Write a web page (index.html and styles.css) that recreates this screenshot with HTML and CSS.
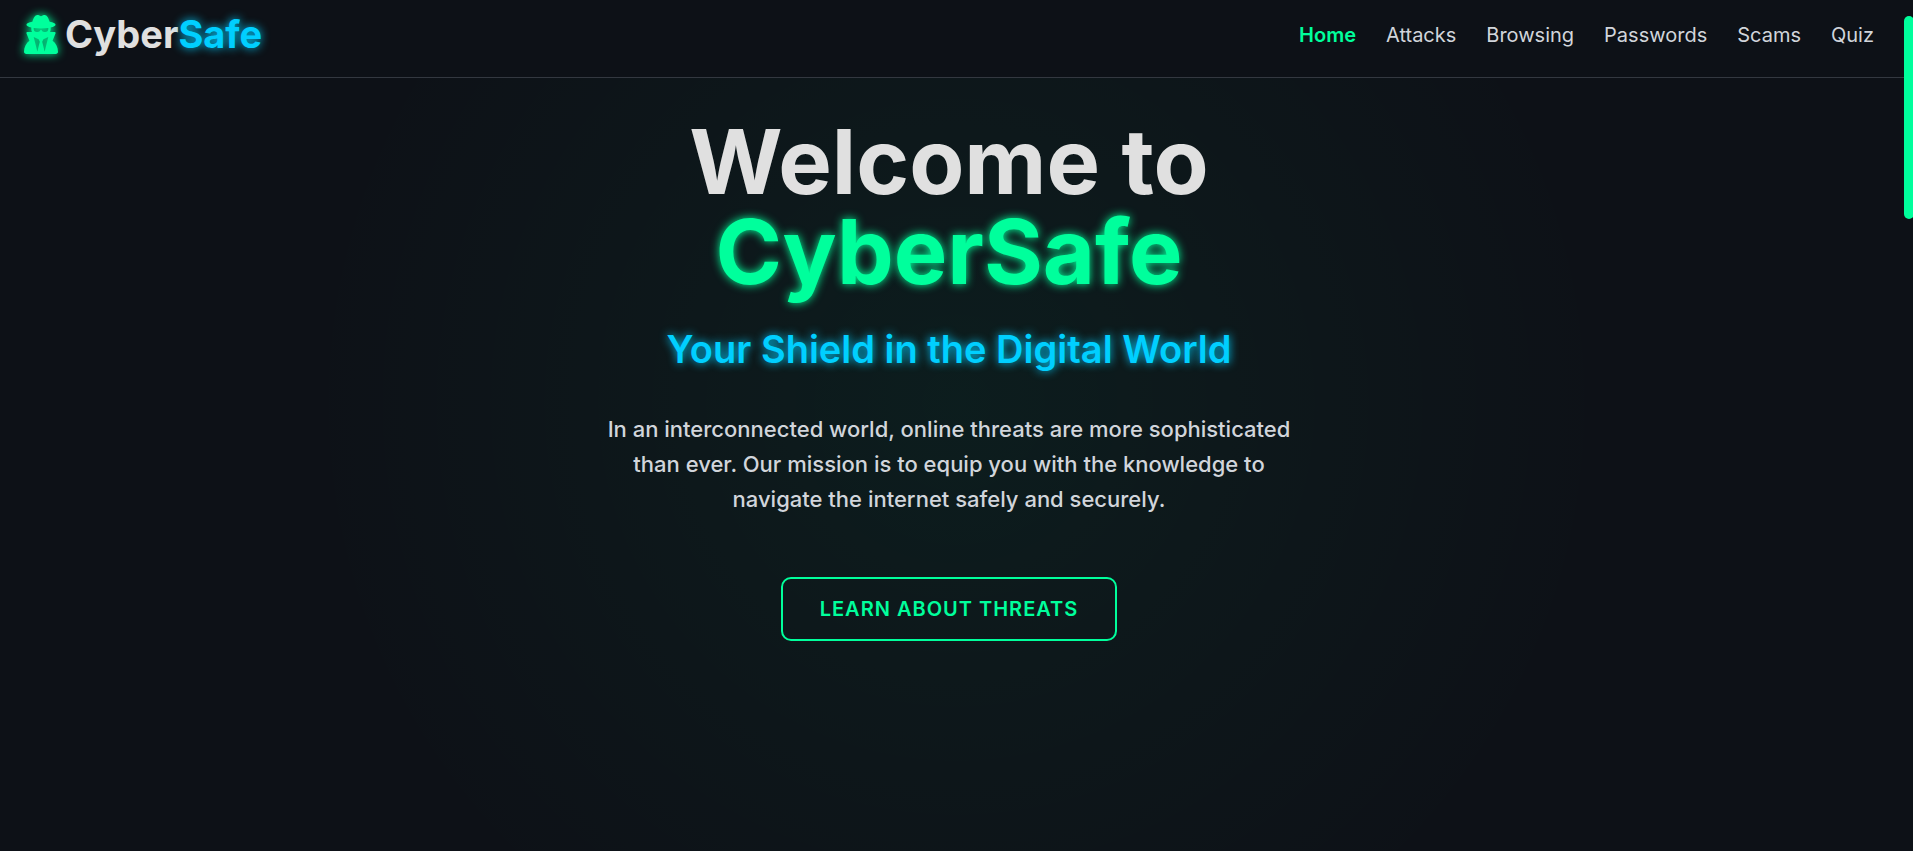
FILE: index.html
```html
<!DOCTYPE html>
<html lang="en">
<head>
    <meta charset="UTF-8">
    <meta name="viewport" content="width=device-width, initial-scale=1.0">
    <title>CyberSafe</title>
    <link rel="stylesheet" href="styles.css">
</head>
<body>
    <header class="site-header">
        <a href="#" class="logo">
            <svg class="logo-icon" viewBox="0 0 448 512" aria-hidden="true">
                <path d="M224 16c-6.7 0-10.8-2.8-15.5-6.1C201.9 5.4 194 0 176 0c-30.5 0-52 43.7-66 89.4C62.7 98.1 32 112.2 32 128c0 14.3 25 27.1 64.6 35.9c-.4 4-.6 8-.6 12.1c0 17 3.3 33.2 9.3 48H45.4C38 224 32 230 32 237.4c0 1.7 .3 3.4 1 5l38.8 96.9C28.2 371.8 0 423.8 0 482.3C0 498.7 13.3 512 29.7 512H418.3c16.4 0 29.7-13.3 29.7-29.7c0-58.5-28.2-110.4-71.7-143L415 242.4c.6-1.6 1-3.3 1-5c0-7.4-6-13.4-13.4-13.4H342.7c6-14.8 9.3-31 9.3-48c0-4.1-.2-8.1-.6-12.1C391 155.1 416 142.3 416 128c0-15.8-30.7-29.9-78-38.6C324 43.7 302.5 0 272 0c-18 0-25.9 5.4-32.5 9.9c-4.8 3.3-8.8 6.1-15.5 6.1zm56 208H267.6c-16.5 0-31.1-10.6-36.3-26.2c-2.3-7-12.2-7-14.5 0c-5.2 15.6-19.9 26.2-36.3 26.2H168c-22.1 0-40-17.9-40-40V169.6c28.2 4.1 61 6.4 96 6.4s67.8-2.3 96-6.4V184c0 22.1-17.9 40-40 40zm-88 96l16 32L176 480 128 288l64 32zm128-32L272 480 240 352l16-32 64-32z"/>
            </svg>
            <span class="logo-text">Cyber<span class="logo-accent">Safe</span></span>
        </a>
        <nav class="nav-links">
            <a href="#home" class="active">Home</a>
            <a href="#attacks">Attacks</a>
            <a href="#browsing">Browsing</a>
            <a href="#passwords">Passwords</a>
            <a href="#scams">Scams</a>
            <a href="#quiz">Quiz</a>
        </nav>
    </header>

    <main class="hero" id="home">
        <h1>Welcome to<br><span class="glow-green">CyberSafe</span></h1>
        <h2>Your Shield in the Digital World</h2>
        <p>In an interconnected world, online threats are more sophisticated than ever. Our mission is to equip you with the knowledge to navigate the internet safely and securely.</p>
        <button type="button" class="cta-button">Learn About Threats</button>
    </main>

    <div class="scroll-thumb"></div>
</body>
</html>
```
FILE: styles.css
```css
:root {
    --bg: #0d1117;
    --green: #00ff9c;
    --blue: #00cfff;
    --text: #e0e0e0;
    --muted: #d1d5db;
}
* {
    box-sizing: border-box;
}
body {
    margin: 0;
    min-height: 100vh;
    display: flex;
    flex-direction: column;
    background-color: var(--bg);
    color: var(--text);
    font-family: 'Inter', sans-serif;
    overflow: hidden;
}
a {
    color: inherit;
    text-decoration: none;
}

/* Header */
.site-header {
    display: flex;
    justify-content: space-between;
    align-items: center;
    padding: 12px 39px 20px 24px;
    border-bottom: 1px solid #333840;
}
.logo {
    display: flex;
    align-items: center;
    gap: 7px;
    font-size: 38px;
    line-height: 45px;
    font-weight: 700;
}
.logo-icon {
    width: 34px;
    height: 39px;
    fill: var(--green);
    filter: drop-shadow(0 0 5px var(--green));
}
.logo-accent {
    color: var(--blue);
    text-shadow: 0 0 10px var(--blue);
}
.nav-links {
    display: flex;
    gap: 30px;
    font-size: 20px;
    line-height: 30px;
    font-weight: 400;
    color: var(--muted);
}
.nav-links .active {
    color: var(--green);
    font-weight: 600;
}

/* Hero */
.hero {
    flex: 1;
    display: flex;
    flex-direction: column;
    align-items: center;
    padding: 39px 15px 40px 0;
    text-align: center;
    background: radial-gradient(circle at 50% 42%, rgba(0, 255, 156, 0.05) 0%, rgba(0, 255, 156, 0) 62%);
}
.hero h1 {
    margin: 0 0 30px;
    font-size: 90px;
    line-height: 90px;
    font-weight: 700;
}
.glow-green {
    color: var(--green);
    text-shadow: 0 0 10px var(--green);
}
.hero h2 {
    margin: 0 0 40px;
    font-size: 38px;
    line-height: 45px;
    font-weight: 600;
    color: var(--blue);
    text-shadow: 0 0 10px var(--blue);
}
.hero p {
    max-width: 700px;
    margin: 0 0 60px;
    font-size: 22px;
    line-height: 35px;
    font-weight: 500;
    color: var(--muted);
}
.cta-button {
    padding: 15px 37px;
    border: 2px solid var(--green);
    border-radius: 10px;
    background: transparent;
    color: var(--green);
    font-family: inherit;
    font-size: 20px;
    line-height: 30px;
    font-weight: 600;
    letter-spacing: 1px;
    text-transform: uppercase;
    cursor: pointer;
}

/* Scrollbar thumb over the page edge */
.scroll-thumb {
    position: fixed;
    top: 16px;
    right: -1px;
    width: 10px;
    height: 203px;
    border-radius: 5px;
    background: var(--green);
}
```
